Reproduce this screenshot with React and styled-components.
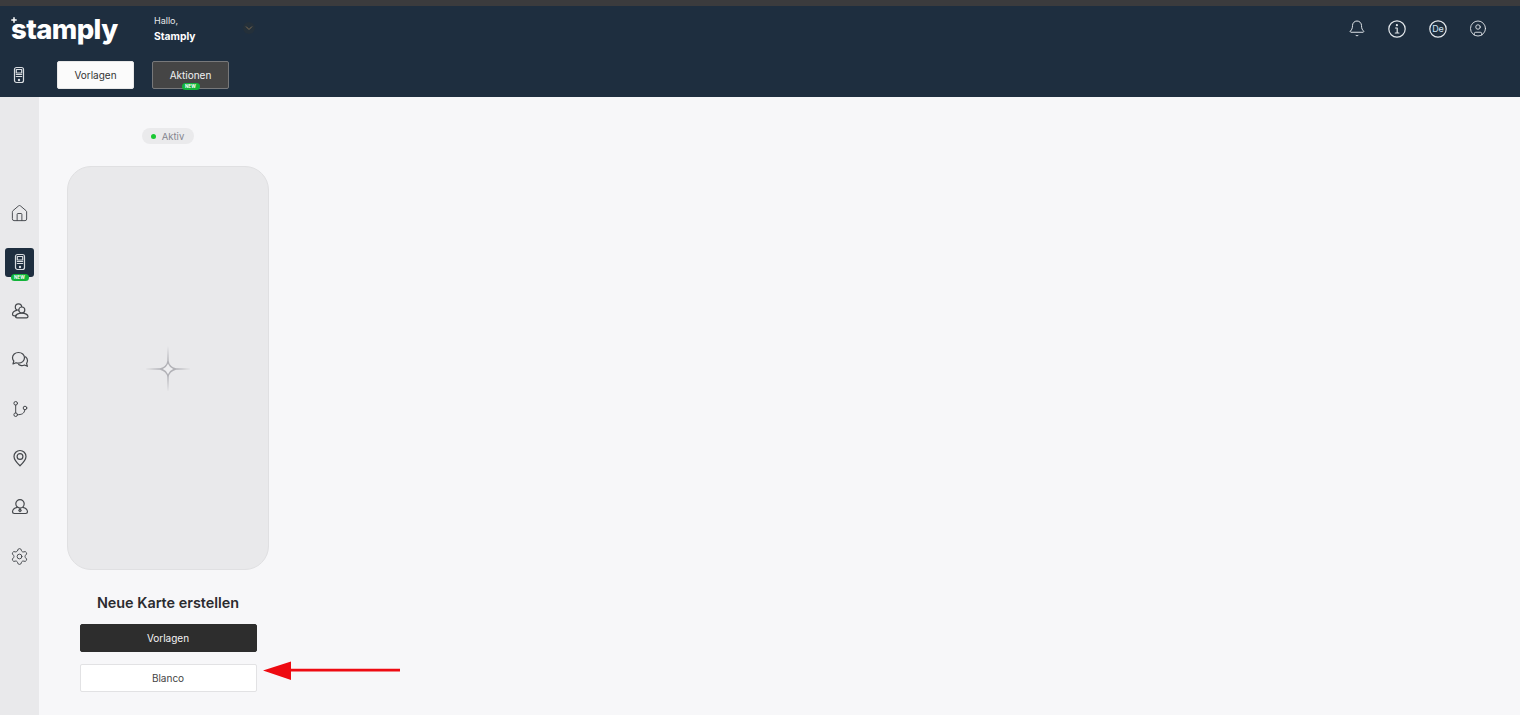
import React from "react";
import styled, { createGlobalStyle } from "styled-components";
import { Bell, House, Settings, CircleUser } from "lucide-react";

const Global = createGlobalStyle`
  html, body { margin: 0; padding: 0; height: 100%; overflow: hidden; }
  body { font-family: Inter, "Noto Sans", sans-serif; background: #f7f7f9; }
  * { box-sizing: border-box; }
`;

const Page = styled.div`
  width: 1520px;
  height: 715px;
  display: flex;
  flex-direction: column;
  background: #f7f7f9;
`;
const TopStrip = styled.div`
  height: 6px;
  background: #3b3b3d;
  flex: none;
`;
const Header = styled.header`
  height: 91px;
  flex: none;
  background: #1e2e3f;
  display: flex;
  flex-direction: column;
`;
const HeaderTop = styled.div`
  height: 49px;
  display: flex;
  align-items: center;
  padding: 0 33px 4px 11px;
`;
const Logo = styled.div`
  position: relative;
  width: 107px;
  font-size: 27.5px;
  font-weight: 800;
  letter-spacing: -0.6px;
  line-height: 34px;
  color: #fff;
  margin-top: 0;
`;
const LogoPlus = styled.svg`
  position: absolute;
  left: 0;
  top: 5px;
`;
const Greeting = styled.div`
  margin-left: 36px;
  width: 89px;
  color: #fff;
  display: flex;
  flex-direction: column;
  gap: 3px;
  margin-top: 0;
`;
const Hello = styled.span`
  font-size: 9px;
  line-height: 11px;
  color: #e6e8ea;
`;
const Name = styled.span`
  font-size: 10.3px;
  line-height: 14px;
  font-weight: 700;
`;
const Chevron = styled.span`
  width: 12px;
  height: 12px;
  border-radius: 50%;
  background: #24303a;
  display: flex;
  align-items: center;
  justify-content: center;
  margin-top: -2px;
`;
const HeaderIcons = styled.div`
  margin-left: auto;
  display: flex;
  align-items: center;
  gap: 22.5px;
  color: #e4e8ec;
`;
const HeaderIcon = styled.span`
  width: 18px;
  height: 18px;
  display: flex;
  align-items: center;
  justify-content: center;
`;
const HeaderBottom = styled.div`
  height: 28px;
  margin-top: 6px;
  display: flex;
  align-items: center;
  color: #d8dce0;
`;
const PhoneSlot = styled.span`
  width: 57px;
  display: flex;
  justify-content: center;
  padding-right: 19px;
  padding-left: 0;
`;
const TabButton = styled.button`
  position: relative;
  width: 77px;
  height: 28px;
  margin-right: 18px;
  border-radius: 2px;
  font: 400 10px Inter, sans-serif;
  border: 1px solid ${(p) => (p.$active ? "#e8e8e8" : "#77787a")};
  background: ${(p) => (p.$active ? "#fbfbfb" : "#454545")};
  color: ${(p) => (p.$active ? "#333" : "#f2f2f2")};
`;
const NewBadge = styled.span`
  position: absolute;
  left: 50%;
  bottom: ${(p) => p.$bottom}px;
  transform: translateX(-50%);
  width: 18px;
  height: 7px;
  border-radius: 4px;
  background: #12b43a;
  color: #fff;
  font: 700 4.5px/7px Inter, sans-serif;
  text-align: center;
`;
const Body = styled.div`
  flex: 1;
  display: flex;
  min-height: 0;
`;
const Sidebar = styled.nav`
  width: 39px;
  flex: none;
  background: #e9e9eb;
  padding-top: 91.5px;
  display: flex;
  flex-direction: column;
  align-items: center;
  margin-right: 28px;
  color: #45484c;
`;
const NavItem = styled.div`
  height: 49px;
  flex: none;
  display: flex;
  align-items: center;
  justify-content: center;
`;
const ActiveNav = styled.div`
  position: relative;
  width: 29px;
  height: 29px;
  border-radius: 3px;
  background: #1e2e3f;
  color: #d8dce0;
  display: flex;
  align-items: center;
  justify-content: center;
`;
const Column = styled.main`
  position: relative;
  width: 202px;
  display: flex;
  flex-direction: column;
  align-items: center;
  padding-top: 31px;
`;
const Status = styled.div`
  width: 52px;
  height: 16px;
  border-radius: 8px;
  background: #eaeaec;
  display: flex;
  align-items: center;
  justify-content: center;
  gap: 6px;
  font-size: 9.5px;
  color: #85858f;
  padding-right: 1px;
`;
const Dot = styled.span`
  width: 5px;
  height: 5px;
  border-radius: 50%;
  background: #19c832;
`;
const PhoneCard = styled.div`
  width: 202px;
  height: 404px;
  margin-top: 22px;
  background: #e9e9eb;
  border: 1px solid #e0e0e2;
  border-radius: 24px;
  display: flex;
  align-items: center;
  justify-content: center;
  padding-top: 1px;
`;
const Title = styled.h2`
  margin: 24px 0 0;
  font-size: 14.4px;
  line-height: 18px;
  font-weight: 600;
  color: #2b2b2f;
  white-space: nowrap;
`;
const Action = styled.button`
  width: 177px;
  height: 28px;
  margin-top: ${(p) => p.$mt}px;
  border-radius: 2px;
  font: 400 10px Inter, sans-serif;
  background: ${(p) => (p.$dark ? "#2d2d2d" : "#fff")};
  color: ${(p) => (p.$dark ? "#f4f4f4" : "#444")};
  border: 1px solid ${(p) => (p.$dark ? "#2d2d2d" : "#e2e2e4")};
`;
const ArrowMark = styled.svg`
  position: absolute;
  left: 196px;
  top: 564px;
`;

const S = { fill: "none", stroke: "currentColor", strokeWidth: 1.2, strokeLinecap: "round", strokeLinejoin: "round" };

const Phone = ({ size = 18 }) => (
  <svg width={size} height={size} viewBox="0 0 18 18" {...S}>
    <rect x="4.500" y="1.500" width="9" height="15" rx="2" />
    <rect x="6.300" y="3.500" width="5.400" height="3.500" />
    <path d="M6.300 8.500h5.400M6.300 10.500h5.400" />
    <circle cx="9" cy="14" r="0.6" fill="currentColor" />
  </svg>
);
const InfoIcon = () => (
  <svg width="18" height="18" viewBox="0 0 18 18" {...S}>
    <circle cx="9" cy="9" r="8.200" />
    <path d="M7.500 8h1.700v5M7.300 13h3.600" />
    <circle cx="8.900" cy="5.200" r="0.500" fill="currentColor" />
  </svg>
);
const LangIcon = () => (
  <svg width="18" height="18" viewBox="0 0 18 18" {...S}>
    <circle cx="9" cy="9" r="8.200" />
    <text x="9" y="12" textAnchor="middle" fontSize="9" fontFamily="Inter" fill="#cfe4f4" stroke="none">De</text>
  </svg>
);
const Users = () => (
  <svg width="18" height="18" viewBox="0 0 18 18" {...S}>
    <circle cx="7.500" cy="5" r="3.200" />
    <circle cx="10.800" cy="8" r="3" fill="#e9e9eb" />
    <path d="M5.500 8.300C3 9 1.500 10.600 1.500 12.200c0 1 .8 1.600 2 1.600h2" />
    <path d="M6 15.800c-1 0-1.500-.6-1.500-1.300 0-1.800 2.800-3.400 6.300-3.400s6.200 1.600 6.200 3.400c0 .7-.5 1.300-1.500 1.300z" />
  </svg>
);
const Chats = () => (
  <svg width="18" height="18" viewBox="0 0 18 18" {...S}>
    <path d="M7.500 1.500c3.400 0 6 2.300 6 5.300s-2.600 5.400-6 5.400c-.9 0-1.700-.2-2.500-.5L2 13l.8-3C2 9.100 1.500 8 1.500 6.800c0-3 2.600-5.300 6-5.300z" />
    <path d="M14.500 5.800c1.300 1 2 2.300 2 3.800 0 1-.3 1.900-.9 2.700l.8 3-3-1.300c-1 .5-2 .7-3 .6-1-.1-2-.4-2.800-1" />
  </svg>
);
const Flow = () => (
  <svg width="18" height="18" viewBox="0 0 18 18" {...S} strokeWidth="1">
    <circle cx="4.700" cy="3.300" r="1.800" />
    <circle cx="4.700" cy="14.700" r="1.800" />
    <circle cx="14" cy="8" r="1.800" />
    <path d="M4.700 5.100v7.800M6.500 14.700c4 0 6.900-.8 7.300-4.900" />
  </svg>
);
const Pin = () => (
  <svg width="18" height="18" viewBox="0 0 18 18" {...S}>
    <path d="M9 16.800C5.500 13.500 3 10.800 3 7.500a6 6 0 0 1 12 0c0 3.300-2.500 6-6 9.300z" />
    <circle cx="9" cy="7.500" r="2.900" />
  </svg>
);
const Agent = () => (
  <svg width="18" height="18" viewBox="0 0 18 18" {...S}>
    <circle cx="9" cy="5.800" r="4.200" />
    <path d="M6 9.400C3 10.200 1.500 11.800 1.500 13.800c0 1.100.7 1.700 1.800 1.700h11.400c1.100 0 1.800-.6 1.800-1.700 0-2-1.500-3.600-4.500-4.400" />
    <path d="M9 10.500l-1.200 2 1.200 1.200 1.200-1.200z" />
  </svg>
);
const Sparkle = () => (
  <svg width="46" height="46" viewBox="0 0 46 46" fill="#b2b2b7">
    <path d="M23 0 L23.700 15 Q24.500 20.500 31 22.300 L46 23 L31 23.700 Q24.500 25.500 23.700 31 L23 46 L22.300 31 Q21.500 25.500 15 23.700 L0 23 L15 22.300 Q21.500 20.500 22.300 15 Z" />
    <path d="M23 17.800 Q24.500 21.500 28.200 23 Q24.500 24.500 23 28.200 Q21.500 24.500 17.800 23 Q21.500 21.500 23 17.800 Z" fill="#eeeef0" />
  </svg>
);

export default function App() {
  return (
    <Page>
      <Global />
      <TopStrip />
      <Header>
        <HeaderTop>
          <Logo>
            <LogoPlus width="6" height="6" viewBox="0 0 6 6" fill="none" stroke="#fff" strokeWidth="1.500">
              <path d="M3 0.300v5.400M0.300 3h5.400" />
            </LogoPlus>
            stamply
          </Logo>
          <Greeting>
            <Hello>Hallo,</Hello>
            <Name>Stamply</Name>
          </Greeting>
          <Chevron>
            <svg width="8" height="6" viewBox="0 0 8 6" fill="none" stroke="#7d6a52" strokeWidth="1">
              <path d="M1 1.500l3 3 3-3" />
            </svg>
          </Chevron>
          <HeaderIcons>
            <HeaderIcon><Bell size={19} strokeWidth={1.3} /></HeaderIcon>
            <HeaderIcon><InfoIcon /></HeaderIcon>
            <HeaderIcon><LangIcon /></HeaderIcon>
            <HeaderIcon><CircleUser size={21} strokeWidth={1.2} /></HeaderIcon>
          </HeaderIcons>
        </HeaderTop>
        <HeaderBottom>
          <PhoneSlot><Phone /></PhoneSlot>
          <TabButton $active>Vorlagen</TabButton>
          <TabButton>
            Aktionen
            <NewBadge $bottom={-2}>NEW</NewBadge>
          </TabButton>
        </HeaderBottom>
      </Header>
      <Body>
        <Sidebar>
          <NavItem><House size={19} strokeWidth={1.2} /></NavItem>
          <NavItem>
            <ActiveNav>
              <Phone />
              <NewBadge $bottom={-4}>NEW</NewBadge>
            </ActiveNav>
          </NavItem>
          <NavItem><Users /></NavItem>
          <NavItem><Chats /></NavItem>
          <NavItem><Flow /></NavItem>
          <NavItem><Pin /></NavItem>
          <NavItem><Agent /></NavItem>
          <NavItem><Settings size={19} strokeWidth={1.2} /></NavItem>
        </Sidebar>
        <Column>
          <Status><Dot />Aktiv</Status>
          <PhoneCard><Sparkle /></PhoneCard>
          <Title>Neue Karte erstellen</Title>
          <Action $dark $mt={12}>Vorlagen</Action>
          <Action $mt={12}>Blanco</Action>
          <ArrowMark width="140" height="22" viewBox="0 0 140 22">
            <path d="M0 9.500 L28 0.500 V7.700 H137 V10.500 H28 V19 Z" fill="#ee0b12" />
          </ArrowMark>
        </Column>
      </Body>
    </Page>
  );
}
